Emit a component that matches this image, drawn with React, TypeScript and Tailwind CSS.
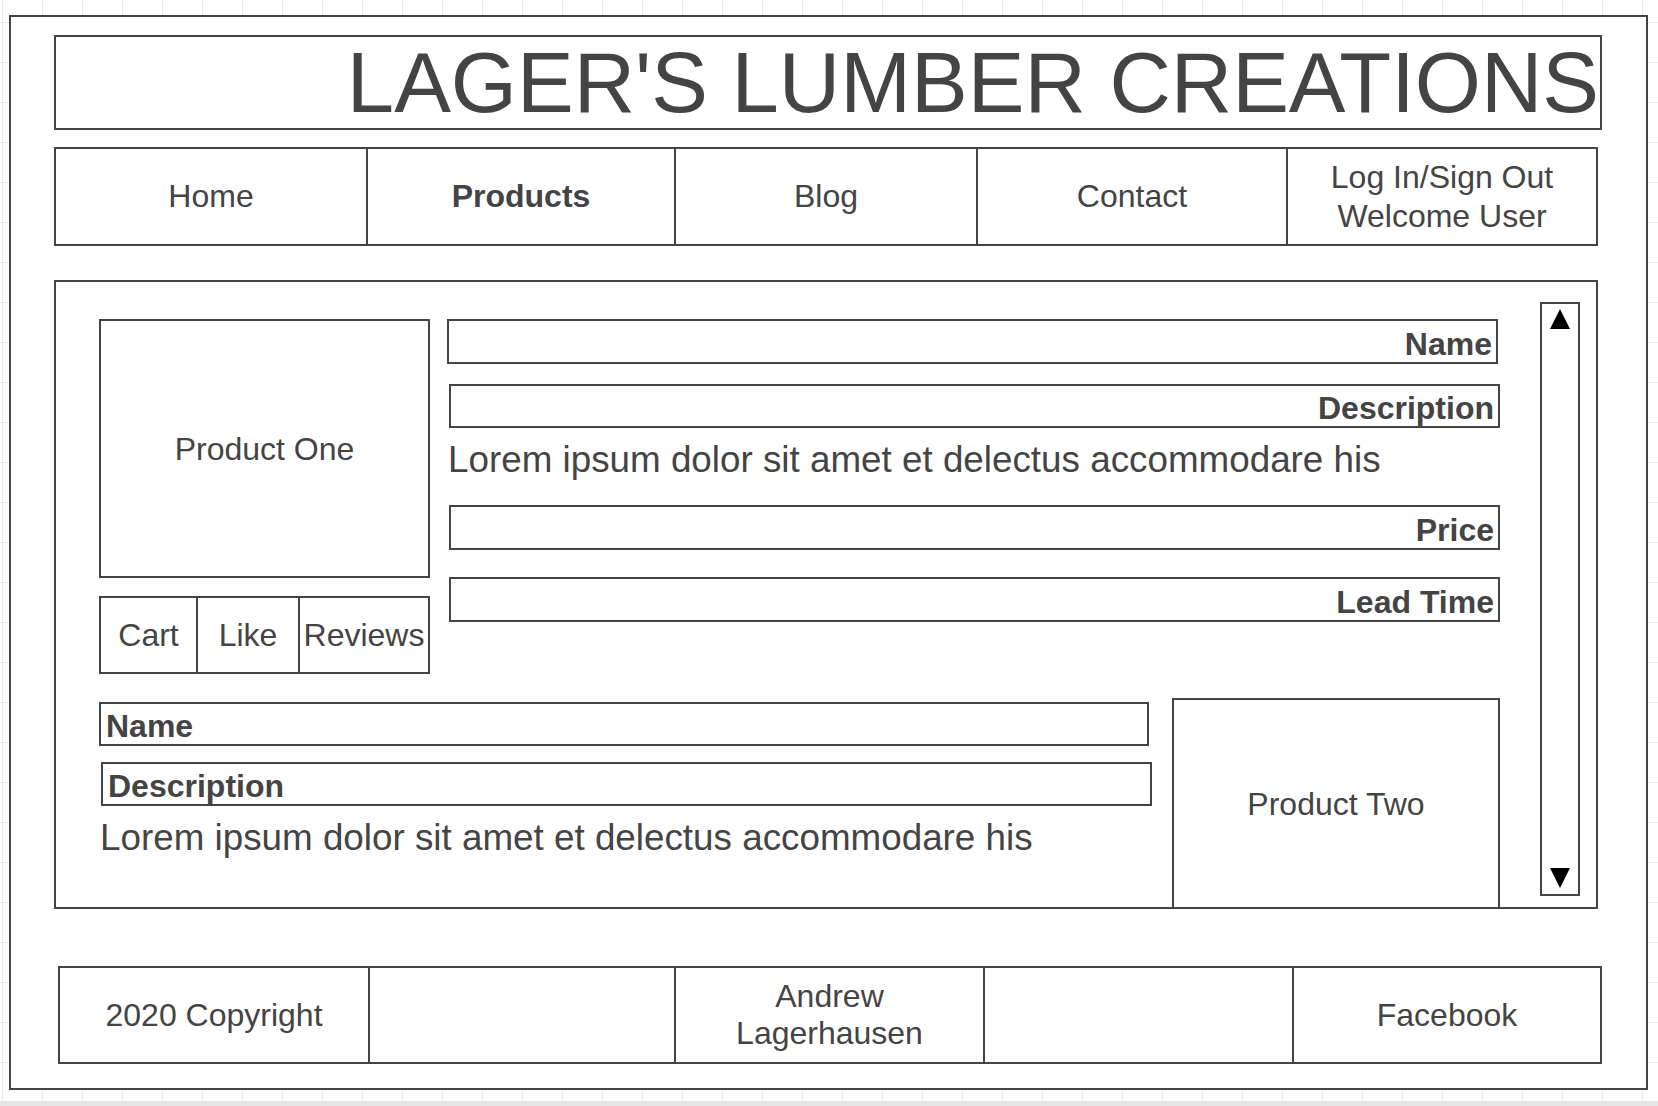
const line = "border-[#444]";

function Field({ label, align = "right", className = "" }: { label: string; align?: "left" | "right"; className?: string }) {
  return (
    <div
      className={`flex h-[44px] items-center border-2 ${line} pt-[4px] text-[32px] font-bold leading-none ${
        align === "right" ? "justify-end pr-[4px]" : "justify-start pl-[5px]"
      } ${className}`}
    >
      {label}
    </div>
  );
}

function Lorem({ className = "" }: { className?: string }) {
  return (
    <p className={`whitespace-nowrap text-[36.8px] leading-none ${className}`}>
      Lorem ipsum dolor sit amet et delectus accommodare his
    </p>
  );
}

function Triangle({ down = false }: { down?: boolean }) {
  return (
    <svg width="20" height="20" viewBox="0 0 20 20">
      <polygon points={down ? "0,0 20,0 10,20" : "10,0 20,20 0,20"} fill="#000" />
    </svg>
  );
}

export default function App() {
  return (
    <div className="flex h-[1106px] w-[1658px] flex-col overflow-hidden bg-white bg-[image:linear-gradient(to_right,#ebebeb_1px,transparent_1px),linear-gradient(to_bottom,#ebebeb_1px,transparent_1px)] bg-[size:40px_40px] bg-[position:2px_22px] font-['Liberation_Sans',Arial,sans-serif] text-[#444]">
      <div className={`ml-[9px] mt-[15px] h-[1075px] w-[1639px] shrink-0 border-2 ${line} bg-white`}>
        {/* title */}
        <header
          className={`ml-[43px] mt-[18px] flex h-[95px] w-[1548px] items-center justify-end border-2 ${line} pr-[1px] text-[85px] leading-none`}
        >
          <h1>LAGER'S LUMBER CREATIONS</h1>
        </header>

        {/* nav */}
        <nav
          className={`ml-[43px] mt-[17px] grid h-[99px] w-[1544px] grid-cols-[310px_308px_302px_310px_310px] border-2 ${line} text-[32px] leading-[1.2]`}
        >
          <div className="flex items-center justify-center">Home</div>
          <div className={`flex items-center justify-center border-l-2 ${line} font-bold`}>Products</div>
          <div className={`flex items-center justify-center border-l-2 ${line}`}>Blog</div>
          <div className={`flex items-center justify-center border-l-2 ${line}`}>Contact</div>
          <div className={`flex flex-col items-center justify-center border-l-2 ${line} text-center`}>
            <span>Log In/Sign Out</span>
            <span>Welcome User</span>
          </div>
        </nav>

        {/* products panel */}
        <main className={`ml-[43px] mt-[34px] flex h-[629px] w-[1544px] border-2 ${line}`}>
          <div className="flex w-[1444px] flex-col pl-[43px] pt-[37px]">
            <div className="flex h-[355px]">
              <div className="flex w-[331px] flex-col">
                <div className={`flex h-[259px] items-center justify-center border-2 ${line} text-[32px]`}>
                  Product One
                </div>
                <div
                  className={`mt-[18px] grid h-[78px] grid-cols-[95px_102px_130px] border-2 ${line} text-[32px]`}
                >
                  <div className="flex items-center justify-center">Cart</div>
                  <div className={`flex items-center justify-center border-l-2 ${line}`}>Like</div>
                  <div className={`flex items-center justify-center whitespace-nowrap border-l-2 ${line}`}>
                    Reviews
                  </div>
                </div>
              </div>

              <div className="ml-[17px] flex w-[1053px] flex-col">
                <Field label="Name" className="h-[45px] w-[1051px]" />
                <Field label="Description" className="ml-[2px] mt-[20px] w-[1051px]" />
                <div className="h-[77px] pl-[1px] pt-[14px]">
                  <Lorem />
                </div>
                <Field label="Price" className="ml-[2px] h-[45px] w-[1051px]" />
                <Field label="Lead Time" className="ml-[2px] mt-[27px] h-[45px] w-[1051px]" />
              </div>
            </div>

            <div className="mt-[24px] flex h-[209px]">
              <div className="flex w-[1053px] flex-col">
                <Field label="Name" align="left" className="mt-[4px] w-[1050px]" />
                <Field label="Description" align="left" className="ml-[2px] mt-[16px] w-[1051px]" />
                <Lorem className="ml-[1px] mt-[14px]" />
              </div>
              <div
                className={`ml-[20px] flex h-[209px] w-[328px] items-center justify-center border-2 border-b-0 ${line} text-[32px]`}
              >
                Product Two
              </div>
            </div>
          </div>

          {/* scrollbar */}
          <div
            className={`ml-[40px] mt-[20px] flex h-[594px] w-[40px] flex-col items-center justify-between border-2 ${line} pb-[6px] pt-[5px]`}
          >
            <Triangle />
            <Triangle down />
          </div>
        </main>

        {/* footer */}
        <footer
          className={`ml-[47px] mt-[57px] grid h-[98px] w-[1544px] grid-cols-[308px_306px_309px_309px_308px] border-2 ${line} text-[32px] leading-[1.15]`}
        >
          <div className="flex items-center justify-center">2020 Copyright</div>
          <div className={`border-l-2 ${line}`} />
          <div className={`flex flex-col items-center justify-center border-l-2 ${line} text-center`}>
            <span>Andrew</span>
            <span>Lagerhausen</span>
          </div>
          <div className={`border-l-2 ${line}`} />
          <div className={`flex items-center justify-center border-l-2 ${line}`}>Facebook</div>
        </footer>
      </div>
      <div className="flex-1" />
      <div className="h-[5px] shrink-0 bg-[#e6e6e6]" />
    </div>
  );
}
